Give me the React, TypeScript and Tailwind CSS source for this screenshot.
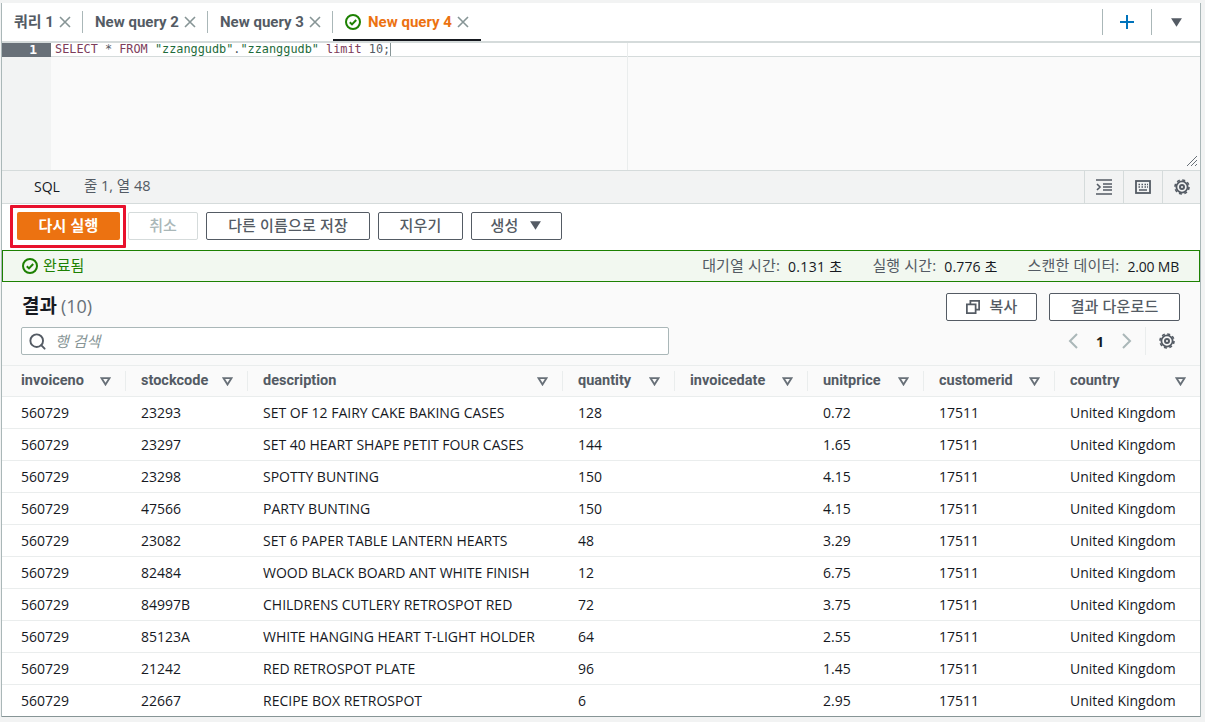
import React from 'react';
import { Search } from 'lucide-react';

const columns = ['invoiceno', 'stockcode', 'description', 'quantity', 'invoicedate', 'unitprice', 'customerid', 'country'];

const rows = [
  ['560729', '23293', 'SET OF 12 FAIRY CAKE BAKING CASES', '128', '', '0.72', '17511', 'United Kingdom'],
  ['560729', '23297', 'SET 40 HEART SHAPE PETIT FOUR CASES', '144', '', '1.65', '17511', 'United Kingdom'],
  ['560729', '23298', 'SPOTTY BUNTING', '150', '', '4.15', '17511', 'United Kingdom'],
  ['560729', '47566', 'PARTY BUNTING', '150', '', '4.15', '17511', 'United Kingdom'],
  ['560729', '23082', 'SET 6 PAPER TABLE LANTERN HEARTS', '48', '', '3.29', '17511', 'United Kingdom'],
  ['560729', '82484', 'WOOD BLACK BOARD ANT WHITE FINISH', '12', '', '6.75', '17511', 'United Kingdom'],
  ['560729', '84997B', 'CHILDRENS CUTLERY RETROSPOT RED', '72', '', '3.75', '17511', 'United Kingdom'],
  ['560729', '85123A', 'WHITE HANGING HEART T-LIGHT HOLDER', '64', '', '2.55', '17511', 'United Kingdom'],
  ['560729', '21242', 'RED RETROSPOT PLATE', '96', '', '1.45', '17511', 'United Kingdom'],
  ['560729', '22667', 'RECIPE BOX RETROSPOT', '6', '', '2.95', '17511', 'United Kingdom'],
];

const gridCols = 'grid grid-cols-[123px_122px_315px_112px_133px_116px_131px_146px]';

const CheckCircle = ({ className }: { className: string }) => (
  <svg viewBox="0 0 16 16" className={className} fill="none" stroke="currentColor" strokeWidth="2">
    <circle cx="8" cy="8" r="7" />
    <path d="M4.8 8.2l2.2 2.2 4.2-4.4" />
  </svg>
);

const Caret = ({ className }: { className: string }) => (
  <svg viewBox="0 0 12 10" className={className} fill="currentColor">
    <path d="M1 1h10L6 9z" />
  </svg>
);

const SortIcon = () => (
  <svg viewBox="0 0 12 10" className="h-[9px] w-[11px] text-[#687078]" fill="none" stroke="currentColor" strokeWidth="2">
    <path d="M1.5 1.2h9L6 8.4z" />
  </svg>
);

const CloseIcon = () => (
  <svg viewBox="0 0 12 12" className="ml-[5px] h-3 w-3 text-[#879596]" fill="none" stroke="currentColor" strokeWidth="1.6">
    <path d="M1 1l10 10M11 1L1 11" />
  </svg>
);

const Gear = () => (
  <svg viewBox="0 0 16 16" className="h-4 w-4 text-[#545b64]" fill="none" stroke="currentColor">
    <circle cx="8" cy="8" r="5.6" strokeWidth="1.8" />
    <circle cx="8" cy="8" r="7" strokeWidth="1.6" strokeDasharray="3 2.5" />
    <circle cx="8" cy="8" r="2" strokeWidth="2" />
  </svg>
);

const Tab = ({ label, first }: { label: string; first?: boolean }) => (
  <div className={`flex h-[22px] items-center border-r border-[#aab7b8] pl-[12px] ${first ? 'w-[81px]' : 'w-[125px]'}`}>
    <span className="font-['Roboto','Noto_Sans_CJK_KR',sans-serif] text-[15px] font-bold whitespace-nowrap text-[#545b64]">{label}</span>
    <CloseIcon />
  </div>
);

const OutlineButton = ({ children, className }: { children: React.ReactNode; className: string }) => (
  <button className={`flex h-7 items-center justify-center rounded-[2px] border border-[#545b64] bg-white pb-px text-[15px] font-medium tracking-[0.15px] text-[#545b64] ${className}`}>
    {children}
  </button>
);

export default function App() {
  return (
    <div className="h-[722px] w-[1205px] overflow-hidden bg-[#f2f3f3] pt-[3px] font-['Open_Sans','Noto_Sans_CJK_KR',sans-serif] text-[14px] text-[#16191f]">
      <div className="ml-px w-[1200px] border-x border-x-[#aab7b8]">
        {/* tabs */}
        <div className="flex h-[40px] items-center border-b-2 border-[#d5dbdb] bg-white">
          <Tab label="쿼리 1" first />
          <Tab label="New query 2" />
          <Tab label="New query 3" />
          <div className="relative flex h-full items-center px-[12px]">
            <CheckCircle className="h-4 w-4 text-[#1d8102]" />
            <span className="ml-[7px] font-['Roboto',sans-serif] text-[15px] font-bold whitespace-nowrap text-[#ec7211]">New query 4</span>
            <CloseIcon />
            <div className="absolute right-0 bottom-0 left-0 h-[2px] bg-[#16191f]" />
          </div>
          <div className="ml-auto flex h-[26px] items-center">
            <div className="flex h-full w-[49px] items-center justify-center border-l border-[#aab7b8]">
              <svg viewBox="0 0 14 14" className="h-[14px] w-[14px] text-[#0073bb]" fill="none" stroke="currentColor" strokeWidth="2">
                <path d="M7 0v14M0 7h14" />
              </svg>
            </div>
            <div className="flex h-full w-[49px] items-center justify-center border-l border-[#aab7b8]">
              <Caret className="h-[11px] w-[13px] text-[#545b64]" />
            </div>
          </div>
        </div>

        {/* editor */}
        <div className="relative flex h-[128px] border-b border-[#d5dbdb] bg-[#fafafa]">
          <div className="w-[49px] bg-[#f2f3f3]">
            <div className="h-[14px] bg-[#687078] pr-[14px] text-right font-['DejaVu_Sans_Mono',monospace] text-[13px] leading-[14px] font-bold text-white">1</div>
          </div>
          <div className="flex-1">
            <div className="h-[14px] border-b border-[#d5dbdb] bg-white pl-[4px] font-['DejaVu_Sans_Mono',monospace] text-[11.85px] leading-[13px] whitespace-nowrap text-[#545b64]">
              <span className="text-[#7d3c5a]">SELECT</span> <span>*</span> <span className="text-[#7d3c5a]">FROM</span>{' '}
              <span className="text-[#1d6b3a]">"zzanggudb"</span>.<span className="text-[#1d6b3a]">"zzanggudb"</span>{' '}
              <span className="text-[#7d3c5a]">limit</span> <span>10;</span>
              <span className="inline-block h-[13px] w-px bg-[#879596] align-top" />
            </div>
          </div>
          <div className="absolute top-0 bottom-0 left-[625px] w-px bg-[#eaeded]" />
          <svg viewBox="0 0 12 12" className="absolute right-[2px] bottom-[3px] h-3 w-3 text-[#687078]" fill="none" stroke="currentColor" strokeWidth="1">
            <path d="M1 11L11 1M5 11l6-6M9 11l2-2" />
          </svg>
        </div>

        {/* status bar */}
        <div className="flex h-[33px] items-center border-b border-[#d5dbdb] bg-[#f2f3f3] pl-[32px] text-[#545b64]">
          <span className="pb-[2px] text-[#16191f]">SQL</span>
          <span className="ml-[24px] pb-[2px] text-[14.5px]">줄 1, 열 48</span>
          <div className="ml-auto flex h-full">
            <div className="flex w-[39px] items-center justify-center border-l border-[#d5dbdb]">
              <svg viewBox="0 0 16 16" className="h-4 w-4 text-[#545b64]" fill="none" stroke="currentColor" strokeWidth="1.6">
                <path d="M0 1h16M0 15h16M7 5h9M7 8h9M7 11h9M1 5l3 3-3 3" />
              </svg>
            </div>
            <div className="flex w-[39px] items-center justify-center border-l border-[#d5dbdb]">
              <svg viewBox="0 0 16 16" className="h-4 w-4 text-[#545b64]" fill="none" stroke="currentColor" strokeWidth="1.8">
                <rect x="1" y="2" width="14" height="12" />
                <path d="M3.5 5.5h1.5M6.5 5.5h1.5M9.5 5.5h1.5M12 5.5h1M3.5 8h1.5M6.5 8h1.5M9.5 8h1.5M12 8h1M4 11h8" strokeWidth="1.6" />
              </svg>
            </div>
            <div className="flex w-[38px] items-center justify-center border-l border-[#d5dbdb]">
              <Gear />
            </div>
          </div>
        </div>

        {/* actions */}
        <div className="h-[46px] bg-white pt-px">
          <div className="flex items-start pl-2">
            <div className="rounded-[1px] border-[3px] border-[#e8112d] bg-white pt-[4px] pr-[3px] pb-[5px] pl-[4px]">
              <button className="flex h-7 w-[103px] items-center justify-center rounded-[2px] bg-[#ec7211] pb-px text-[15px] font-bold tracking-[0.15px] text-white">다시 실행</button>
            </div>
            <button className="mt-[7px] ml-[2px] flex h-7 w-[70px] items-center justify-center rounded-[2px] border border-[#d5dbdb] bg-white pb-px text-[15px] font-medium text-[#aab7b8]">취소</button>
            <OutlineButton className="mt-[7px] ml-2 w-[164px]">다른 이름으로 저장</OutlineButton>
            <OutlineButton className="mt-[7px] ml-2 w-[85px]">지우기</OutlineButton>
            <OutlineButton className="mt-[7px] ml-2 w-[91px]">
              생성
              <Caret className="ml-[11px] h-[11px] w-[13px] text-[#545b64]" />
            </OutlineButton>
          </div>
        </div>

        {/* status alert */}
        <div className="flex h-[32px] items-center border border-[#1d8102] bg-[#f2f8f0] pr-[20px] pl-[19px]">
          <CheckCircle className="h-4 w-4 text-[#1d8102]" />
          <span className="ml-[5px] pb-px text-[15px] text-[#1d8102]">완료됨</span>
          <div className="ml-auto flex items-center text-[#545b64]">
            <span className="pb-px text-[15px] tracking-[0.15px]">대기열 시간:</span>
            <span className="ml-2 tracking-[0.3px] text-[#16191f]">0.131 초</span>
            <span className="ml-[30px] pb-px text-[15px] tracking-[0.15px]">실행 시간:</span>
            <span className="ml-2 tracking-[0.15px] text-[#16191f]">0.776 초</span>
            <span className="ml-[30px] pb-px text-[15px] tracking-[0.15px]">스캔한 데이터:</span>
            <span className="ml-2 tracking-[-0.2px] text-[#16191f]">2.00 MB</span>
          </div>
        </div>

        {/* results header */}
        <div className="bg-[#fafafa] pt-[11px]">
          <div className="flex h-[28px] items-center justify-between pr-[20px] pl-[20px]">
            <div className="flex items-baseline pb-[2px]">
              <span className="text-[19px] font-bold">결과</span>
              <span className="ml-[4px] text-[18px] text-[#687078]">(10)</span>
            </div>
            <div className="flex gap-3">
              <OutlineButton className="w-[91px]">
                <svg viewBox="0 0 16 16" className="mr-[10px] h-[14px] w-[14px]" fill="none" stroke="currentColor" strokeWidth="2">
                  <rect x="1" y="5" width="10" height="10" />
                  <path d="M5 5V1h10v10h-4" />
                </svg>
                복사
              </OutlineButton>
              <OutlineButton className="w-[131px]">결과 다운로드</OutlineButton>
            </div>
          </div>
          <div className="mt-[6px] flex h-[38px] items-start justify-between pr-[25px] pl-[19px]">
            <div className="flex h-7 w-[648px] items-center rounded-[2px] border border-[#aab7b8] bg-white pl-[6px]">
              <Search size={19} strokeWidth={2.4} className="text-[#545b64]" />
              <span className="ml-[8px] text-[15px] text-[#879596] italic">행 검색</span>
            </div>
            <div className="flex h-7 items-center">
              <svg viewBox="0 0 10 16" className="h-4 w-[10px] text-[#aab7b8]" fill="none" stroke="currentColor" strokeWidth="2">
                <path d="M9 1L2 8l7 7" />
              </svg>
              <span className="mx-[18px] w-2 text-center text-[14px] font-bold">1</span>
              <svg viewBox="0 0 10 16" className="h-4 w-[10px] text-[#aab7b8]" fill="none" stroke="currentColor" strokeWidth="2">
                <path d="M1 1l7 7-7 7" />
              </svg>
              <div className="mx-[13px] h-7 w-px bg-[#eaeded]" />
              <Gear />
            </div>
          </div>

          {/* table */}
          <div className={`${gridCols} h-[32px] items-center border-y border-[#eaeded] bg-[#fafafa]`}>
            {columns.map((col, i) => (
              <div key={col} className={`flex h-[20px] items-center justify-between pr-[14px] ${i === 0 ? 'pl-[19px]' : 'border-l border-[#eaeded] pl-[15px]'}`}>
                <span className="font-['Roboto',sans-serif] text-[14.5px] font-bold text-[#545b64]">{col}</span>
                <SortIcon />
              </div>
            ))}
          </div>
          <div className="bg-white">
            {rows.map((row) => (
              <div key={row[2]} className={`${gridCols} h-[32px] items-center border-b border-[#eaeded] last:border-b-[#879596]`}>
                {row.map((cell, i) => (
                  <div key={i} className={`whitespace-nowrap ${i === 0 ? 'pl-[19px]' : 'pl-[16px]'}`}>{cell}</div>
                ))}
              </div>
            ))}
          </div>
        </div>
      </div>
    </div>
  );
}
